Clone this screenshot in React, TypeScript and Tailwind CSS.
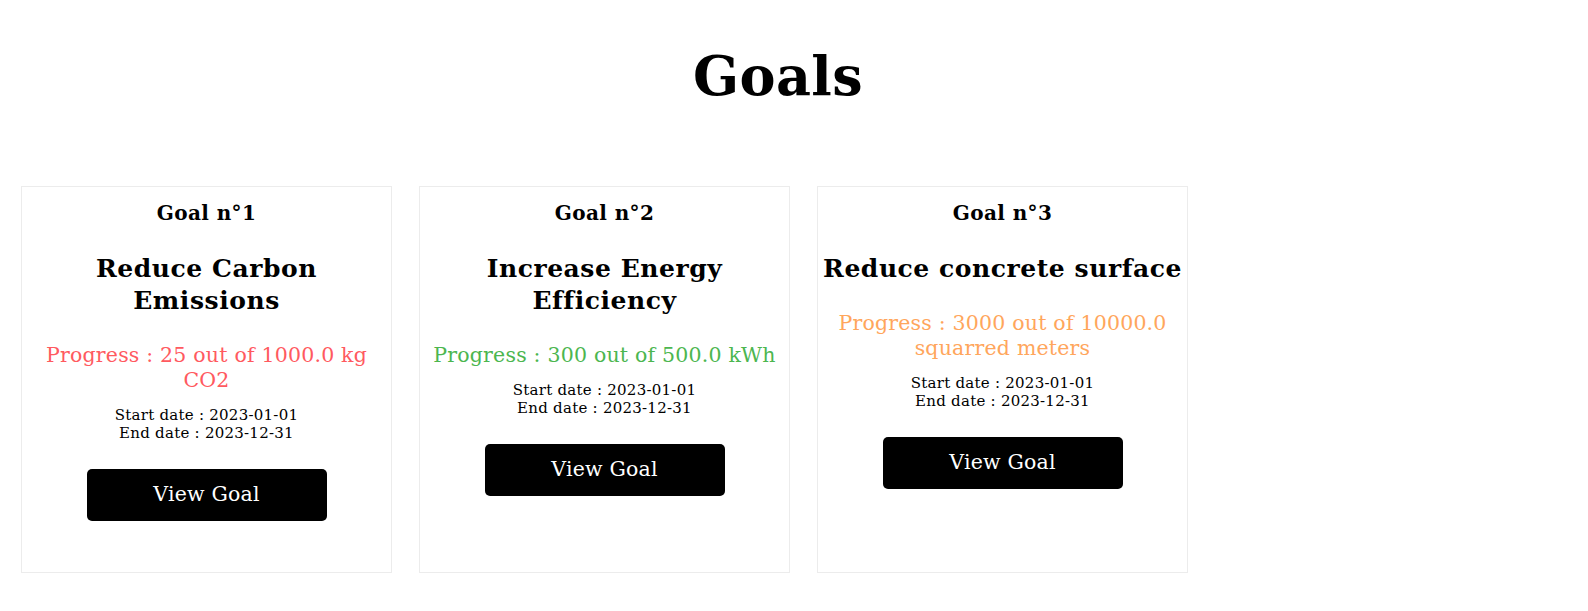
const goals = [
    {
        id: 1,
        title: "Reduce Carbon Emissions",
        progress: "Progress : 25 out of 1000.0 kg CO2",
        color: "text-[#ff5a5f]",
    },
    {
        id: 2,
        title: "Increase Energy Efficiency",
        progress: "Progress : 300 out of 500.0 kWh",
        color: "text-[#4cb64f]",
    },
    {
        id: 3,
        title: "Reduce concrete surface",
        progress: "Progress : 3000 out of 10000.0 squarred meters",
        color: "text-[#ffa65c]",
    },
];

function GoalCard({ goal }: { goal: (typeof goals)[number] }) {
    return (
        <div className="flex h-[387px] w-[371px] flex-col items-center border border-[#ececec] px-[3px] pt-[15px] text-center">
            <h3 className="text-[20px] leading-[22px] font-bold tracking-[0.4px]">
                Goal n°{goal.id}
            </h3>

            <h2 className="mt-[29px] text-[25px] leading-[32px] font-bold tracking-[0.55px]">
                {goal.title}
            </h2>

            <p className={`mt-[26px] text-[20.5px] leading-[25px] tracking-[0.2px] ${goal.color}`}>
                {goal.progress}
            </p>

            <div className="mt-[13px] text-[15px] leading-[18.3px] tracking-[0.25px]">
                <p>Start date : 2023-01-01</p>
                <p>End date : 2023-12-31</p>
            </div>

            <button className="mt-[26px] h-[52px] w-[240px] rounded-[5px] bg-black text-[20.5px] tracking-[0.2px] text-white">
                View Goal
            </button>
        </div>
    );
}

export default function App() {
    return (
        <div className="min-h-[611px] bg-white font-['DejaVu_Serif',serif] text-black">
            <h1 className="pt-[46px] pr-[32px] text-center text-[54px] leading-[60px] font-bold tracking-[0.4px]">
                Goals
            </h1>

            <div className="mt-[80px] flex gap-[27px] pl-[21px]">
                {goals.map((goal) => (
                    <GoalCard key={goal.id} goal={goal} />
                ))}
            </div>
        </div>
    );
}
